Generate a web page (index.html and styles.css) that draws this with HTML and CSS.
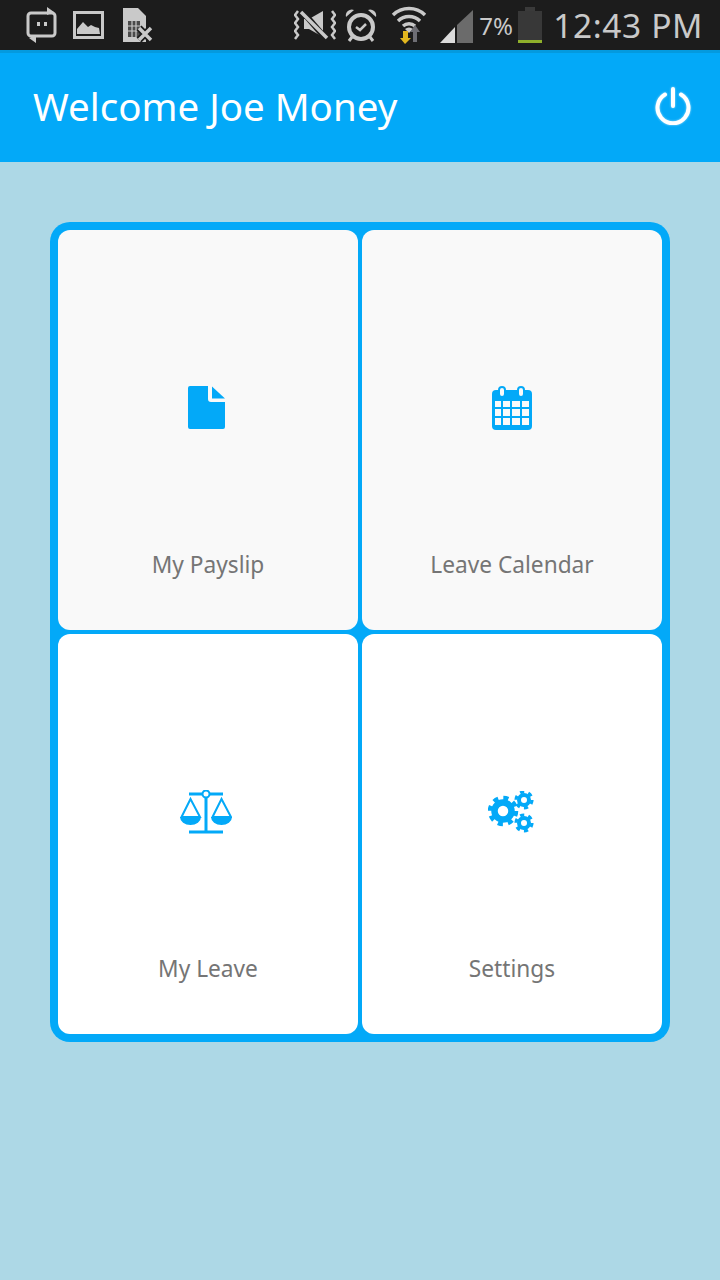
FILE: index.html
```html
<!DOCTYPE html>
<html lang="en">
<head>
  <meta charset="UTF-8">
  <title>Welcome Joe Money</title>
<link rel="stylesheet" href="styles.css">
</head>
<body>

  <div class="status-bar">
    <div class="status-left">
      <svg class="st-sync" viewBox="0 0 31 36"><path d="M9 6H26a3 3 0 0 1 3 3V26a3 3 0 0 1-3 3H21M22 29H5a3 3 0 0 1-3-3V9a3 3 0 0 1 3-3H9" fill="none" stroke="#c9c9c9" stroke-width="3"/><path d="M21 0l7 5-7 3zM10 36l-7-5 7-3z" fill="#c9c9c9"/><rect x="11" y="15" width="3" height="4" fill="#c9c9c9"/><rect x="18" y="15" width="3" height="4" fill="#c9c9c9"/></svg>
      <svg class="st-image" viewBox="0 0 31 28"><rect x="1.5" y="1.5" width="28" height="25" fill="none" stroke="#c9c9c9" stroke-width="3"/><path d="M4 23V18l6-7 5 5 3-2 4 2 4 1 1 6z" fill="#c9c9c9"/></svg>
      <svg class="st-sim" viewBox="0 0 30 34"><path d="M0 0H15L23 8V34H0z" fill="#c9c9c9"/><path d="M5 13H17V29H5z" fill="#4a4a4a"/><path d="M9 13V29M13 13V29M5 18H17M5 23H17" stroke="#c9c9c9" stroke-width="1.2"/><path d="M16 20L28 32M28 20L16 32" stroke="#1c1c1c" stroke-width="7"/><path d="M16 20L28 32M28 20L16 32" stroke="#c9c9c9" stroke-width="3.5"/></svg>
    </div>
    <div class="status-right">
      <svg class="st-mute" viewBox="0 0 42 30"><path d="M4 1l-3 4 3 4-3 4 3 4-3 4 3 4-3 4M38 1l3 4-3 4 3 4-3 4 3 4-3 4 3 4" fill="none" stroke="#c9c9c9" stroke-width="2.5"/><path d="M10 9H15L29 1V27L15 19H10z" fill="#c9c9c9"/><path d="M8 1L33 30" stroke="#1c1c1c" stroke-width="6"/><path d="M7 2L33 28" stroke="#c9c9c9" stroke-width="3.5"/></svg>
      <svg class="st-alarm" viewBox="0 0 32 34"><circle cx="16" cy="19" r="12" fill="none" stroke="#c9c9c9" stroke-width="4"/><path d="M1 9a6 6 0 0 1 8-7zM31 9a6 6 0 0 0-8-7z" fill="#c9c9c9"/><path d="M11 19l4 3 6-6" fill="none" stroke="#c9c9c9" stroke-width="2.5"/><path d="M7 29l-3 4M25 29l3 4" stroke="#c9c9c9" stroke-width="3"/></svg>
      <svg class="st-wifi" viewBox="0 0 36 38"><path d="M2 9a23 23 0 0 1 32 0M7 15a16 16 0 0 1 22 0M12 20a9 9 0 0 1 12 0" fill="none" stroke="#c9c9c9" stroke-width="3.5"/><path d="M18 27l-4-4a6 6 0 0 1 8 0z" fill="#c9c9c9"/><path d="M22 36V26H19L24 19L29 26H26V36z" fill="#6e6e74"/><path d="M12 25H17V32H20L14 38L9 32H12z" fill="#e2b71f"/></svg>
      <svg class="st-signal" viewBox="0 0 33 33"><path d="M33 0V33H17V15z" fill="#6b6b6b"/><path d="M15 17V33H0z" fill="#dcdcdc"/></svg>
      <span class="st-level">7%</span>
      <div class="battery"><div class="battery-cap"></div><div class="battery-body"></div></div>
      <span class="st-time">12:43 PM</span>
    </div>
  </div>

  <div class="app-bar">
    <h1>Welcome Joe Money</h1>
    <svg class="power" viewBox="0 0 38 38"><path d="M11 7.5a15.5 15.5 0 1 0 16 0" fill="none" stroke="white" stroke-width="4" stroke-linecap="round"/><path d="M19 2V19" stroke="white" stroke-width="4" stroke-linecap="round"/></svg>
  </div>

  <div class="menu">
    <div class="tile shaded">
      <div class="tile-icon icon-doc">
        <svg width="37" height="44" viewBox="0 0 37 44"><path d="M2 0H20V13a3 3 0 0 0 3 3H37V41a2 2 0 0 1-2 2H2a2 2 0 0 1-2-2V2a2 2 0 0 1 2-2z" fill="#03a9f8"/><path d="M24 0.500L37 12.500H24z" fill="#03a9f8"/></svg>
      </div>
      <div class="tile-label">My Payslip</div>
    </div>
    <div class="tile shaded">
      <div class="tile-icon">
        <svg width="40" height="44" viewBox="0 0 40 44">
          <rect x="0" y="4" width="40" height="40" rx="4" fill="#03a9f8"/>
          <rect x="7" y="1" width="6" height="10" rx="3" fill="#fafafa" stroke="#03a9f8" stroke-width="2"/>
          <rect x="26" y="1" width="6" height="10" rx="3" fill="#fafafa" stroke="#03a9f8" stroke-width="2"/>
          <path d="M3 15H9V21H3zM11 15H18V21H11zM20 15H28V21H20zM30 15H37V21H30zM3 23H9V30H3zM11 23H18V30H11zM20 23H28V30H20zM30 23H37V30H30zM3 32H9V39H3zM11 32H18V39H11zM20 32H28V39H20zM30 32H37V39H30z" fill="#fafafa"/>
        </svg>
      </div>
      <div class="tile-label">Leave Calendar</div>
    </div>
    <div class="tile">
      <div class="tile-icon icon-scale">
        <svg width="52" height="44" viewBox="0 0 52 44">
          <path d="M9 4H22M30 4H43M26 7V41M9 42H43" stroke="#03a9f8" stroke-width="3"/>
          <circle cx="26" cy="4" r="3.500" fill="white" stroke="#03a9f8" stroke-width="2"/>
          <path d="M10.500 9L1.500 27H20zM41.500 9L32.500 27H51z" fill="none" stroke="#03a9f8" stroke-width="2"/>
          <path d="M0 27H21a10.500 8 0 0 1-21 0zM31 27H52a10.500 8 0 0 1-21 0z" fill="#03a9f8"/>
        </svg>
      </div>
      <div class="tile-label">My Leave</div>
    </div>
    <div class="tile">
      <div class="tile-icon icon-gears">
        <svg width="46" height="42" viewBox="0 0 46 42">
          <circle cx="15" cy="20" r="8.500" fill="none" stroke="#03a9f8" stroke-width="6.500"/>
          <circle cx="15" cy="20" r="13" fill="none" stroke="#03a9f8" stroke-width="4.500" stroke-dasharray="5.100 5.100"/>
          <circle cx="36" cy="9" r="5" fill="none" stroke="#03a9f8" stroke-width="4"/>
          <circle cx="36" cy="9" r="8" fill="none" stroke="#03a9f8" stroke-width="3.200" stroke-dasharray="4.190 4.190"/>
          <circle cx="36" cy="32" r="5" fill="none" stroke="#03a9f8" stroke-width="4"/>
          <circle cx="36" cy="32" r="8" fill="none" stroke="#03a9f8" stroke-width="3.200" stroke-dasharray="4.190 4.190"/>
        </svg>
      </div>
      <div class="tile-label">Settings</div>
    </div>
  </div>

</body>
</html>
```

FILE: styles.css
```css
body {
  margin: 0;
  padding: 0;
  font-family: 'Noto Sans', sans-serif;
  background: #add8e6;
  min-height: 1280px;
}

.status-bar {
  height: 50px;
  background: #1c1c1c;
  display: flex;
  justify-content: space-between;
  align-items: center;
  padding: 0 17px 0 26px;
  color: #c9c9c9;
}

.status-left, .status-right {
  display: flex;
  align-items: center;
}

.st-sync { width: 31px; height: 36px; margin-right: 16px; }
.st-image { width: 31px; height: 28px; margin-right: 19px; }
.st-sim { width: 30px; height: 34px; }

.st-mute { width: 42px; height: 30px; margin-right: 9px; }
.st-alarm { width: 32px; height: 34px; margin-right: 14px; }
.st-wifi { width: 36px; height: 38px; margin-right: 13px; }
.st-signal { width: 33px; height: 33px; margin: 3px 6px 0 0; }

.st-level {
  font-size: 24px;
  width: 34px;
  margin-right: 5px;
  white-space: nowrap;
}

.battery {
  width: 24px;
  margin-right: 11px;
  display: flex;
  flex-direction: column;
  align-items: center;
}

.battery-cap {
  width: 10px;
  height: 4px;
  background: #3a3a3a;
}

.battery-body {
  width: 24px;
  height: 32px;
  box-sizing: border-box;
  background: #383838;
  border-bottom: 3px solid #8fb02b;
}

.st-time {
  font-size: 33.500px;
  letter-spacing: 0.6px;
  white-space: nowrap;
}

.app-bar {
  height: 112px;
  box-sizing: border-box;
  background: #03a9f8;
  box-shadow: inset 0 3px 0 #049ade;
  display: flex;
  justify-content: space-between;
  align-items: center;
  padding: 0 28px 0 33px;
  color: white;
}

.app-bar h1 {
  margin: 0;
  font-size: 38.500px;
  font-weight: 400;
}

.power {
  width: 38px;
  height: 38px;
  filter: drop-shadow(0 0 1px rgba(255,255,255,0.6));
}

.menu {
  width: 620px;
  box-sizing: border-box;
  margin: 60px 0 0 50px;
  padding: 8px;
  background: #03a9f8;
  border-radius: 20px;
  display: grid;
  grid-template-columns: 300px 300px;
  grid-template-rows: 400px 400px;
  gap: 4px;
}

.tile {
  background: white;
  border-radius: 12px;
  display: flex;
  flex-direction: column;
  align-items: center;
}

.tile.shaded {
  background: #f9f9f9;
}

.tile-icon {
  height: 60px;
  margin-top: 148px;
  display: flex;
  align-items: center;
  justify-content: center;
}

.icon-doc { padding-right: 3px; }
.icon-scale { padding-right: 4px; }
.icon-gears { padding-right: 2px; }

.tile-label {
  margin-top: 115px;
  font-size: 22.700px;
  line-height: 24px;
  color: #757575;
}
```
